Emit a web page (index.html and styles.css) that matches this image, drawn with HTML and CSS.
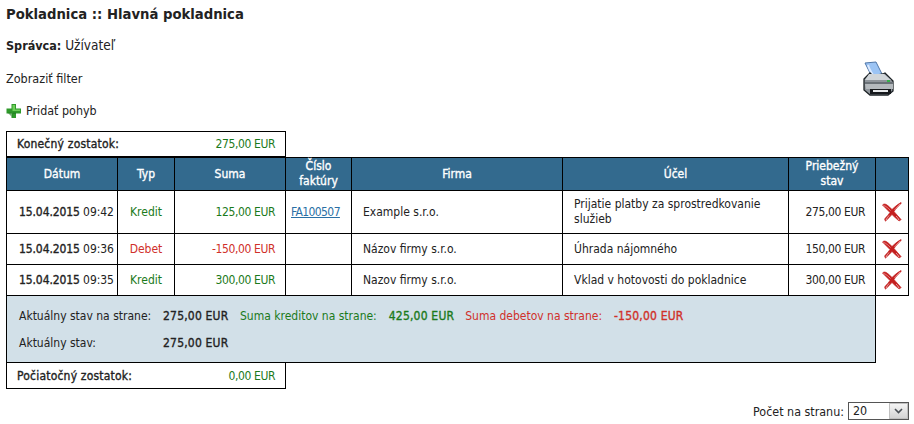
FILE: index.html
```html
<!DOCTYPE html>
<html lang="sk">
<head>
  <meta charset="UTF-8">
  <title>Pokladnica</title>
  <link rel="stylesheet" href="styles.css">
</head>
<body>
  <h1>Pokladnica :: Hlavná pokladnica</h1>
  <p class="manager"><b>Správca:</b> Užívateľ</p>

  <div class="tools">
    <div>
      <p class="filter">Zobraziť filter</p>
      <p class="add">
        <svg width="16" height="16" viewBox="0 0 16 16">
          <path d="M5.500 1h4.500v4.500h5v5h-5v4.500H5.500v-4.500H.5v-5h5z" fill="#2f9a2b"/>
          <path d="M6.500 2h2.500v4.500h5v1.500H6.500z" fill="#6fd05a"/>
          <path d="M1.500 9.500h4v4.500h1v-4.500h3.500V11H6v3" fill="#1f7a20" opacity=".6"/>
        </svg>
        Pridať pohyb
      </p>
    </div>
    <svg class="printer" width="33" height="36" viewBox="0 0 33 36">
      <path d="M3 2l11-1 6 12-10 3z" fill="#9cc4f4" stroke="#4f76a8"/>
      <path d="M6 4c1 4 3 7 5 10" fill="none" stroke="#dceaff" stroke-width="2"/>
      <path d="M2 18l6-6 3 3 10-2 2-1 8 8v10l-5 4H8l-6-5z" fill="#8f959b" stroke="#1d2226" stroke-width="1.300"/>
      <path d="M7 13h15l7 6H3z" fill="#d0d5d9"/>
      <path d="M3 21h28v2H3z" fill="#6a7177"/>
      <path d="M3 23h28v5H4z" fill="#b4b9bd"/>
      <path d="M8 28h21v5H8z" fill="#16191c"/>
      <path d="M11 29h15v2H11z" fill="#e8eaec"/>
      <path d="M25 19h3v2h-3z" fill="#35b24a"/>
    </svg>
  </div>

  <table class="balance">
    <tr><th>Konečný zostatok:</th><td>275,00 EUR</td></tr>
  </table>

  <table class="moves">
    <colgroup>
      <col class="c-date"><col class="c-type"><col class="c-sum"><col class="c-inv">
      <col class="c-firm"><col class="c-note"><col class="c-run"><col class="c-del">
    </colgroup>
    <tr class="head">
      <th>Dátum</th><th>Typ</th><th>Suma</th><th>Číslo<br>faktúry</th>
      <th>Firma</th><th>Účel</th><th>Priebežný<br>stav</th><th></th>
    </tr>
    <tr class="tall">
      <td class="date"><b>15.04.2015</b> 09:42</td>
      <td class="mid credit">Kredit</td>
      <td class="num credit">125,00 EUR</td>
      <td class="invoice"><a href="#">FA100507</a></td>
      <td class="text">Example s.r.o.</td>
      <td class="text">Prijatie platby za sprostredkovanie služieb</td>
      <td class="num">275,00 EUR</td>
      <td class="del"><svg width="20" height="20" viewBox="0 0 20 20"><use href="#cross"/></svg></td>
    </tr>
    <tr>
      <td class="date"><b>15.04.2015</b> 09:36</td>
      <td class="mid debit">Debet</td>
      <td class="num debit">-150,00 EUR</td>
      <td></td>
      <td class="text">Názov firmy s.r.o.</td>
      <td class="text">Úhrada nájomného</td>
      <td class="num">150,00 EUR</td>
      <td class="del"><svg width="20" height="20" viewBox="0 0 20 20"><use href="#cross"/></svg></td>
    </tr>
    <tr>
      <td class="date"><b>15.04.2015</b> 09:35</td>
      <td class="mid credit">Kredit</td>
      <td class="num credit">300,00 EUR</td>
      <td></td>
      <td class="text">Nazov firmy s.r.o.</td>
      <td class="text">Vklad v hotovosti do pokladnice</td>
      <td class="num">300,00 EUR</td>
      <td class="del"><svg width="20" height="20" viewBox="0 0 20 20"><use href="#cross"/></svg></td>
    </tr>
    <tr class="summary">
      <td colspan="7">
        <div class="sum-line">
          <span class="sum-label">Aktuálny stav na strane:</span>
          <b class="sum-value">275,00 EUR</b>
          <span class="credit">Suma kreditov na strane:</span>
          <b class="credit sum-gap">425,00 EUR</b>
          <span class="debit">Suma debetov na strane:</span>
          <b class="debit sum-gap">-150,00 EUR</b>
        </div>
        <div class="sum-line">
          <span class="sum-label">Aktuálny stav:</span>
          <b class="sum-value">275,00 EUR</b>
        </div>
      </td>
      <td class="empty"></td>
    </tr>
  </table>

  <table class="balance bottom">
    <tr><th>Počiatočný zostatok:</th><td>0,00 EUR</td></tr>
  </table>

  <div class="paging">
    Počet na stranu:
    <span class="select">20<span class="arrow"><svg width="9" height="6" viewBox="0 0 9 6"><path d="M1 1l3.500 3.500L8 1" fill="none" stroke="#4a4f55" stroke-width="1.600"/></svg></span></span>
  </div>

  <svg width="0" height="0" class="defs">
    <symbol id="cross" viewBox="0 0 20 20">
      <path d="M.5 3c1.500-1.500 3-1 4.500 0 2 1.300 3.500 3 5 4.500C12.500 5 15.500 2.500 19 .5c.5.500 0 1-.5 1.500-2.500 2.500-5 5-6.500 7.500 2 2.500 4.500 5 7 8-.5 1-1.500 1.500-2.500 1-2.500-2-4.500-4-6.500-6-2 2-4 4.500-6.500 6.500-.8-.5-1-1.500-.5-2.500C5 14.500 6.500 12.500 8 10.500 5.500 8 3 5.500.5 3z" fill="#c41f1f" stroke="#c41f1f" stroke-width=".7"/>
      <path d="M1.500 3.500c2.500.5 5 3 7 5M18 2c-2 2-4 4-5.500 6" fill="none" stroke="#ec9a9a" stroke-width=".8"/>
      <path d="M4 18c1-2 2-3 3-4.500M17 18c-1-2-2-3-3-4" fill="none" stroke="#e8b0b0" stroke-width="1"/>
    </symbol>
  </svg>
</body>
</html>
```

FILE: styles.css
```css
body {
  margin: 0;
  padding: 6px 5px 0 6px;
  font-family: "DejaVu Sans Condensed", "DejaVu Sans", sans-serif;
  font-stretch: condensed;
  font-size: 12px;
  color: #222;
  background: #fff;
}

h1 {
  margin: 0;
  font-size: 14.700px;
  line-height: 16px;
  font-weight: bold;
}

.manager {
  margin: 15px 0 0;
  line-height: 17px;
  font-size: 13.500px;
}

.manager b {
  font-size: 12.500px;
}

.tools {
  display: flex;
  justify-content: space-between;
  align-items: flex-start;
  height: 70px;
  margin-top: 7px;
}

.filter {
  margin: 10px 0 0;
  line-height: 15px;
  font-size: 12.500px;
}

.add {
  display: flex;
  align-items: center;
  gap: 4px;
  margin: 17px 0 0;
  line-height: 16px;
  font-size: 12.400px;
}

.printer {
  margin: 0 14px 0 0;
}

table {
  border-collapse: collapse;
  table-layout: fixed;
}

/* tahoma bold is narrower than dejavu bold, so thicken the regular face */
table b,
table th {
  font-weight: normal;
  -webkit-text-stroke: .35px currentColor;
}

.balance {
  width: 280px;
  height: 26px;
  border: 1px solid #000;
}

.balance th {
  padding: 0 0 0 10px;
  text-align: left;
  letter-spacing: .2px;
}

.balance td {
  width: 100px;
  padding: 0 10px 0 0;
  text-align: right;
  letter-spacing: -.4px;
  color: #1b7a1b;
}

.moves {
  width: 903px;
}

.c-date { width: 111px; }
.c-type { width: 57px; }
.c-sum { width: 111px; }
.c-inv { width: 66px; }
.c-firm { width: 211px; }
.c-note { width: 226px; }
.c-run { width: 87px; }

.moves th,
.moves td {
  border: 1px solid #000;
  padding: 0;
}

.head th {
  height: 32px;
  background: #336a8e;
  color: #fff;
  line-height: 15px;
}

.moves tr td {
  height: 30px;
}

.moves .tall td {
  height: 42px;
}

.moves .date {
  padding-left: 12px;
  white-space: nowrap;
  letter-spacing: -.1px;
}

.mid {
  text-align: center;
}

.moves .invoice {
  padding-left: 5px;
}

.moves .num {
  padding-right: 10px;
  text-align: right;
  letter-spacing: -.4px;
}

.moves .text {
  padding: 0 11px;
  line-height: 15px;
}

.del svg {
  display: block;
  margin: 0 0 0 6px;
}

.credit {
  color: #1b7a1b;
}

.debit {
  color: #d0302a;
}

a {
  color: #2a6fa5;
  letter-spacing: -.6px;
}

.moves .summary td {
  height: 66px;
  padding: 0 12px;
  background: #d2e0e8;
}

.moves .summary .empty {
  border: 0;
  border-left: 1px solid #000;
  background: #fff;
}

.sum-line {
  display: flex;
  align-items: center;
  height: 27px;
}

.sum-line b {
  letter-spacing: .2px;
}

.sum-label {
  width: 144px;
}

.sum-value {
  width: 77px;
}

.sum-gap {
  margin: 0 11px 0 12px;
}

.bottom {
  border-top: 0;
}

.paging {
  display: flex;
  justify-content: flex-end;
  align-items: center;
  gap: 4px;
  margin: 13px 0 0;
  font-size: 12.400px;
}

.select {
  display: flex;
  justify-content: space-between;
  width: 61px;
  height: 18px;
  padding-left: 4px;
  border: 1px solid #555;
  line-height: 16px;
  box-sizing: border-box;
}

.arrow {
  display: flex;
  align-items: center;
  justify-content: center;
  width: 17px;
  background: linear-gradient(#f4f4f4, #d4d4d4);
  border: 1px solid #c0c0c0;
}

.defs {
  position: absolute;
}
```
